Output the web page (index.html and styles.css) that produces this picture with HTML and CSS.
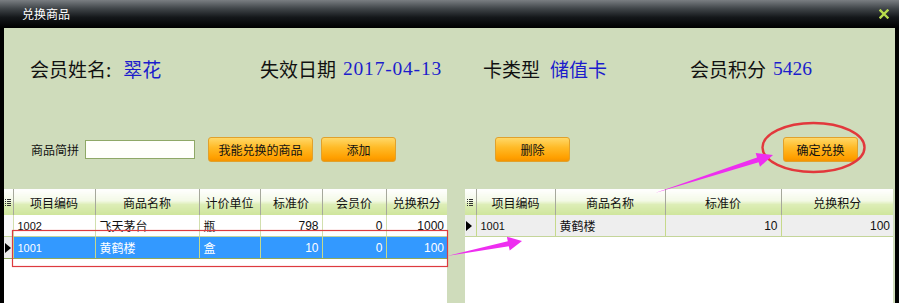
FILE: index.html
```html
<!DOCTYPE html>
<html lang="zh-CN">
  <head>
    <meta charset="UTF-8" />
    <title>兑换商品</title>
    <link rel="stylesheet" href="styles.css">
  </head>
  <body>
    <div class="window">
      <div class="titlebar">
        <span class="title">兑换商品</span>
        <svg class="close" width="10" height="10" viewBox="0 0 10 10">
          <path d="M1.5 1.5 L8.5 8.5 M8.5 1.5 L1.5 8.5" stroke="#b8dc4c" stroke-width="2.4" stroke-linecap="square" />
        </svg>
      </div>

      <div class="content">
        <div class="info">
          <div class="field field-name"><span class="label">会员姓名:</span><span class="value">翠花</span></div>
          <div class="field field-date"><span class="label">失效日期</span><span class="value num date">2017-04-13</span></div>
          <div class="field field-card"><span class="label">卡类型</span><span class="value wide">储值卡</span></div>
          <div class="field"><span class="label">会员积分</span><span class="value num">5426</span></div>
        </div>

        <div class="search">
          <label for="pinyin">商品简拼</label>
          <input type="text" id="pinyin" />
          <button type="button" class="btn btn-mine">我能兑换的商品</button>
          <button type="button" class="btn btn-add">添加</button>
          <button type="button" class="btn btn-del">删除</button>
          <button type="button" class="btn btn-ok">确定兑换</button>
        </div>

        <div class="grids">
          <div class="grid grid-left">
            <table>
              <colgroup>
                <col style="width:9px"><col style="width:82px"><col style="width:104px"><col style="width:61px"><col style="width:62px"><col style="width:64px"><col style="width:61px">
              </colgroup>
              <thead>
                <tr>
                  <th class="ind"><svg width="6" height="9" viewBox="0 0 6 9"><path d="M0 1.5h1M2 1.5h4M0 3.5h1M2 3.5h4M0 5.5h1M2 5.5h4M0 7.5h1M2 7.5h4" stroke="#333" stroke-width="1" /></svg></th>
                  <th>项目编码</th>
                  <th>商品名称</th>
                  <th>计价单位</th>
                  <th>标准价</th>
                  <th>会员价</th>
                  <th>兑换积分</th>
                </tr>
              </thead>
              <tbody>
                <tr>
                  <td class="ind blank"></td>
                  <td class="code">1002</td>
                  <td>飞天茅台</td>
                  <td>瓶</td>
                  <td class="num">798</td>
                  <td class="num">0</td>
                  <td class="num">1000</td>
                </tr>
                <tr class="selected">
                  <td class="ind"><svg width="6" height="10" viewBox="0 0 6 10"><path d="M0 0 L6 5 L0 10 Z" fill="#000" /></svg></td>
                  <td class="code">1001</td>
                  <td>黄鹤楼</td>
                  <td>盒</td>
                  <td class="num">10</td>
                  <td class="num">0</td>
                  <td class="num">100</td>
                </tr>
              </tbody>
            </table>
          </div>

          <div class="grid grid-right">
            <table>
              <colgroup>
                <col style="width:11px"><col style="width:79px"><col style="width:110px"><col style="width:116px"><col style="width:112px">
              </colgroup>
              <thead>
                <tr>
                  <th class="ind"><svg width="6" height="9" viewBox="0 0 6 9"><path d="M0 1.5h1M2 1.5h4M0 3.5h1M2 3.5h4M0 5.5h1M2 5.5h4M0 7.5h1M2 7.5h4" stroke="#333" stroke-width="1" /></svg></th>
                  <th>项目编码</th>
                  <th>商品名称</th>
                  <th>标准价</th>
                  <th>兑换积分</th>
                </tr>
              </thead>
              <tbody>
                <tr class="current">
                  <td class="ind"><svg width="6" height="10" viewBox="0 0 6 10"><path d="M0 0 L6 5 L0 10 Z" fill="#000" /></svg></td>
                  <td class="code">1001</td>
                  <td>黄鹤楼</td>
                  <td class="num">10</td>
                  <td class="num">100</td>
                </tr>
              </tbody>
            </table>
          </div>
        </div>
      </div>

      <!-- red / magenta annotations drawn on top of the screenshot -->
      <svg class="marks" width="899" height="303" viewBox="0 0 899 303">
        <ellipse cx="813.5" cy="147.5" rx="51" ry="24.5" fill="none" stroke="#e2383c" stroke-width="2.4" />
        <rect x="12.5" y="230.5" width="435" height="36" fill="none" stroke="#dd3b3f" stroke-width="1.2" />
        <polygon points="655,193 757,157.5 755.7,153 773,155 760,166.7 758.6,162.3" fill="#ee2ef0" />
        <polygon points="447,256 507.8,241.3 506.9,236.8 522,241 509.7,250.6 508.8,246.2" fill="#ee2ef0" />
      </svg>
    </div>
  </body>
</html>
```

FILE: styles.css
```css
body {
  margin: 0;
  background: #000;
  font-family: "Noto Sans CJK SC", "Liberation Sans", sans-serif;
}
.window {
  position: relative;
  width: 899px;
  height: 303px;
  display: flex;
  flex-direction: column;
  overflow: hidden;
}
.titlebar {
  height: 27px;
  flex: none;
  display: flex;
  align-items: center;
  justify-content: space-between;
  padding: 0 10px 1px 22px;
  background: linear-gradient(#7a7e82, #41464a 30%, #14171a 62%, #000);
}
.title {
  color: #fff;
  font-size: 12px;
  line-height: 14px;
}
.close {
  display: block;
}
.content {
  flex: 1;
  background: #cfdcbb;
  border-left: 4px solid #000;
  border-right: 4px solid #000;
  display: flex;
  flex-direction: column;
}
.info {
  display: flex;
  height: 22px;
  margin-top: 30px;
  padding-left: 26px;
  font-size: 19px;
  line-height: 22px;
  color: #111;
}
.field {
  display: flex;
  white-space: nowrap;
}
.field-name {
  width: 230px;
}
.field-date {
  width: 223px;
}
.field-card {
  width: 207px;
}
.value {
  color: #1c1ccc;
  margin-left: 7px;
}
.field-name .value {
  margin-left: 12px;
}
.value.wide {
  margin-left: 10px;
}
.value.num {
  font-family: "Liberation Serif", serif;
  font-size: 19.5px;
}
.value.date {
  letter-spacing: 0.8px;
}
.search {
  display: flex;
  align-items: center;
  height: 25px;
  margin-top: 57px;
  padding-left: 27px;
  font-size: 12px;
}
.search label {
  width: 48px;
  white-space: nowrap;
  color: #111;
}
.search input {
  box-sizing: border-box;
  width: 110px;
  height: 19px;
  margin: 0 0 0 6px;
  border: 1px solid #8fa866;
  background: #fffffa;
  padding: 0;
}
.btn {
  box-sizing: border-box;
  height: 25px;
  width: 75px;
  padding: 0;
  border: 1px solid #e0a12c;
  border-radius: 3px;
  background: linear-gradient(#ffd868, #ffbb28 40%, #ffa000 85%, #f59400);
  font-family: inherit;
  font-size: 12px;
  color: #111;
}
.btn-mine {
  width: 105px;
  margin-left: 13px;
}
.btn-add {
  margin-left: 8px;
}
.btn-del {
  margin-left: 99px;
}
.btn-ok {
  margin-left: 213px;
}
.grids {
  flex: 1;
  display: flex;
  gap: 18px;
  margin-top: 27px;
  padding-right: 2px;
}
.grid {
  background: #fff;
}
.grid-left {
  width: 443px;
}
.grid-right {
  width: 428px;
}
table {
  border-collapse: collapse;
  table-layout: fixed;
  width: 100%;
  font-size: 12px;
}
th {
  height: 26px;
  padding: 0;
  font-weight: normal;
  color: #111;
  background: linear-gradient(#ffffff, #f3f9e6 45%, #dcedb6 60%, #cfe59c);
  border-right: 1px solid #a6a89c;
  text-align: center;
  white-space: nowrap;
}
th:last-child {
  border-right: none;
}
th.ind svg {
  display: block;
  margin: 0 auto;
}
td {
  height: 21px;
  padding: 0 4px;
  border-right: 1px solid #d2dfae;
  border-bottom: 1px solid #c4d59a;
  white-space: nowrap;
  overflow: hidden;
  color: #111;
}
td:last-child {
  border-right: none;
}
td.ind {
  padding: 0;
  background: #f2f2f2;
}
td.ind.blank {
  background: #fafafa;
}
td.ind svg {
  display: block;
  margin-left: 1px;
}
td.code {
  font-family: "Liberation Sans", sans-serif;
  font-size: 11px;
}
td.num {
  text-align: right;
  font-family: "Liberation Sans", sans-serif;
  font-size: 12px;
  padding-right: 3px;
}
tr.selected td {
  background: #3399ff;
  color: #fff;
  border-right-color: #c6d98a;
  border-bottom-color: #8fa85e;
}
tr.selected td.ind {
  background: #eeeeee;
}
tr.current td {
  background: #eeeeee;
  border-right-color: #c6d98a;
}
.marks {
  position: absolute;
  left: 0;
  top: 0;
  pointer-events: none;
}
```
